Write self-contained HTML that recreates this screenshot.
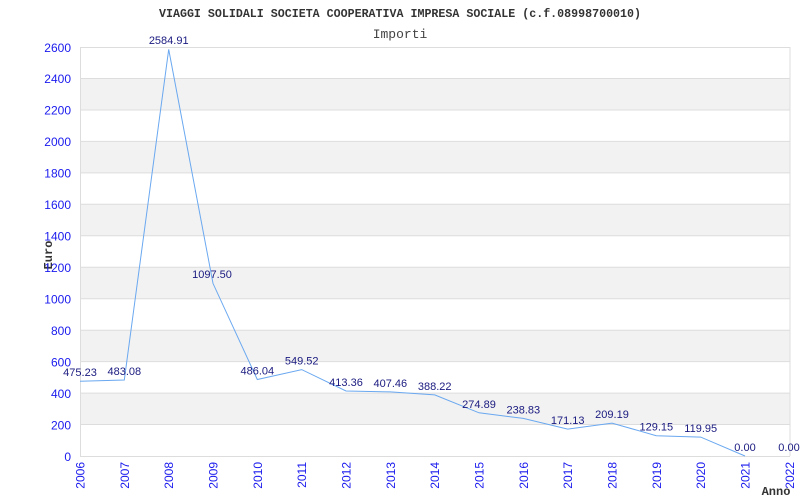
<!DOCTYPE html>
<html><head><meta charset="utf-8"><style>html,body{margin:0;padding:0;background:#fff;width:800px;height:500px;overflow:hidden}</style></head><body>
<svg width="800" height="500" xmlns="http://www.w3.org/2000/svg" style="display:block">
<g fill="#f2f2f2">
<rect x="80.5" y="393.1" width="709.5" height="31.5"/>
<rect x="80.5" y="330.2" width="709.5" height="31.5"/>
<rect x="80.5" y="267.2" width="709.5" height="31.5"/>
<rect x="80.5" y="204.3" width="709.5" height="31.5"/>
<rect x="80.5" y="141.4" width="709.5" height="31.5"/>
<rect x="80.5" y="78.5" width="709.5" height="31.5"/>
</g>
<g stroke="#dddddd" stroke-width="1">
<line x1="80" y1="424.5" x2="790" y2="424.5"/><line x1="80" y1="393.1" x2="790" y2="393.1"/><line x1="80" y1="361.6" x2="790" y2="361.6"/><line x1="80" y1="330.2" x2="790" y2="330.2"/><line x1="80" y1="298.7" x2="790" y2="298.7"/><line x1="80" y1="267.2" x2="790" y2="267.2"/><line x1="80" y1="235.8" x2="790" y2="235.8"/><line x1="80" y1="204.3" x2="790" y2="204.3"/><line x1="80" y1="172.9" x2="790" y2="172.9"/><line x1="80" y1="141.4" x2="790" y2="141.4"/><line x1="80" y1="110" x2="790" y2="110"/><line x1="80" y1="78.5" x2="790" y2="78.5"/><line x1="80" y1="47.5" x2="790" y2="47.5"/>
<line x1="80.5" y1="47" x2="80.5" y2="456"/><line x1="790" y1="47" x2="790" y2="456"/><line x1="80" y1="456.5" x2="790" y2="456.5"/>
</g>
<polyline fill="none" stroke="#6aa8f0" stroke-width="1" points="80,381.2 124.3,380 168.7,49.4 213,283.4 257.3,379.5 301.7,369.6 346,391 390.3,391.9 434.7,394.9 479,412.8 523.3,418.4 567.7,429.1 612,423.1 656.3,435.7 700.7,437.1 745,456"/>
<g font-family="Liberation Mono, monospace" text-anchor="middle">
<text x="400" y="17" font-size="12" font-weight="bold" fill="#333" textLength="482" lengthAdjust="spacingAndGlyphs">VIAGGI SOLIDALI SOCIETA COOPERATIVA IMPRESA SOCIALE (c.f.08998700010)</text>
<text x="400" y="38" font-size="13" fill="#444">Importi</text>
<text x="776" y="495" font-size="12" font-weight="bold" fill="#333">Anno</text>
<text transform="translate(52,255) rotate(-90)" font-size="12" font-weight="bold" fill="#333">Euro</text>
</g>
<g font-family="Liberation Sans, sans-serif" font-size="12" fill="#1a1aee" text-anchor="end">
<text x="71" y="461">0</text><text x="71" y="429.5">200</text><text x="71" y="398">400</text><text x="71" y="366.5">600</text><text x="71" y="335">800</text><text x="71" y="303.5">1000</text><text x="71" y="272">1200</text><text x="71" y="240.5">1400</text><text x="71" y="209">1600</text><text x="71" y="177.5">1800</text><text x="71" y="146">2000</text><text x="71" y="114.5">2200</text><text x="71" y="83">2400</text><text x="71" y="52">2600</text>
</g>
<g font-family="Liberation Sans, sans-serif" font-size="12" fill="#1a1aee" text-anchor="end">
<text transform="translate(84.5,462) rotate(-90)">2006</text><text transform="translate(128.8,462) rotate(-90)">2007</text><text transform="translate(173.2,462) rotate(-90)">2008</text><text transform="translate(217.5,462) rotate(-90)">2009</text><text transform="translate(261.8,462) rotate(-90)">2010</text><text transform="translate(306.2,462) rotate(-90)">2011</text><text transform="translate(350.5,462) rotate(-90)">2012</text><text transform="translate(394.8,462) rotate(-90)">2013</text><text transform="translate(439.2,462) rotate(-90)">2014</text><text transform="translate(483.5,462) rotate(-90)">2015</text><text transform="translate(527.8,462) rotate(-90)">2016</text><text transform="translate(572.2,462) rotate(-90)">2017</text><text transform="translate(616.5,462) rotate(-90)">2018</text><text transform="translate(660.8,462) rotate(-90)">2019</text><text transform="translate(705.2,462) rotate(-90)">2020</text><text transform="translate(749.5,462) rotate(-90)">2021</text><text transform="translate(793.8,462) rotate(-90)">2022</text>
</g>
<g font-family="Liberation Sans, sans-serif" font-size="11" fill="#1a1a80" text-anchor="middle">
<text x="80" y="376">475.23</text><text x="124.3" y="375">483.08</text><text x="168.7" y="44">2584.91</text><text x="212" y="278">1097.50</text><text x="257.3" y="374.5">486.04</text><text x="301.7" y="364.6">549.52</text><text x="346" y="386">413.36</text><text x="390.3" y="386.9">407.46</text><text x="434.7" y="389.9">388.22</text><text x="479" y="407.8">274.89</text><text x="523.3" y="413.4">238.83</text><text x="567.7" y="424.1">171.13</text><text x="612" y="418.1">209.19</text><text x="656.3" y="430.7">129.15</text><text x="700.7" y="432.1">119.95</text><text x="745" y="451">0.00</text><text x="789" y="451">0.00</text>
</g>
</svg>
</body></html>
